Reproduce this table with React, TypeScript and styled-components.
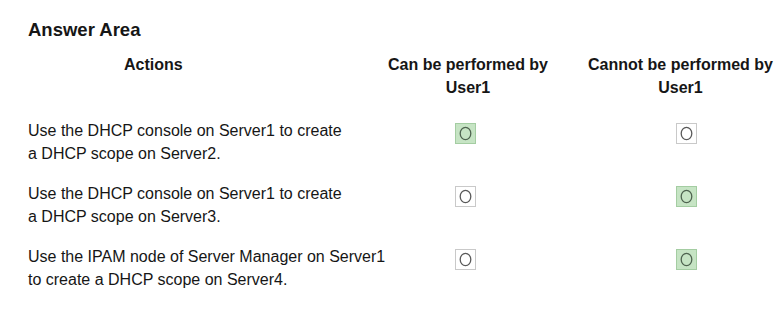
import React from "react";
import styled, { createGlobalStyle } from "styled-components";

const GlobalStyle = createGlobalStyle`
  body {
    margin: 0;
    background: #ffffff;
    overflow: hidden;
    font-family: "Liberation Sans", Arial, sans-serif;
    color: #161616;
  }
`;

const Page = styled.div`
  width: 784px;
  height: 332px;
  padding: 19px 0 0 28px;
  box-sizing: border-box;
`;

const Title = styled.div`
  font-size: 18.5px;
  line-height: 22px;
  font-weight: bold;
  margin-bottom: 12px;
`;

const Table = styled.div`
  display: grid;
  grid-template-columns: 332px 216px 209px;
  row-gap: 17px;
`;

const HeadCell = styled.div<{ $pad?: number }>`
  font-size: 16px;
  line-height: 23px;
  font-weight: bold;
  text-align: ${(p) => (p.$pad ? "left" : "center")};
  padding-left: ${(p) => p.$pad || 0}px;
  white-space: nowrap;
  margin-bottom: 3px;
`;

const ActionText = styled.div`
  font-size: 16px;
  line-height: 23px;
  white-space: pre;
  min-width: 0;
`;

const ChoiceCell = styled.div<{ $shift: number }>`
  display: flex;
  justify-content: center;
  align-items: flex-start;
  padding-top: 4px;
  padding-left: ${(p) => Math.max(p.$shift, 0)}px;
  padding-right: ${(p) => Math.max(-p.$shift, 0)}px;
`;

const Box = styled.div<{ $selected: boolean }>`
  width: 21px;
  height: 21px;
  box-sizing: border-box;
  display: flex;
  align-items: center;
  justify-content: center;
  background: ${(p) => (p.$selected ? "#c6e4c4" : "#ffffff")};
  border: 1px solid ${(p) => (p.$selected ? "#a4cda2" : "#c9c9c9")};
`;

const Radio = ({ selected }: { selected: boolean }) => (
  <Box $selected={selected}>
    <svg width="13" height="15" viewBox="0 0 13 15">
      <ellipse
        cx="6.5"
        cy="7.5"
        rx="5.3"
        ry="6.2"
        fill="none"
        stroke={selected ? "#4f6450" : "#5a5a5a"}
        strokeWidth="1.3"
      />
    </svg>
  </Box>
);

const rows = [
  {
    text: "Use the DHCP console on Server1 to create\na DHCP scope on Server2.",
    answer: 0,
  },
  {
    text: "Use the DHCP console on Server1 to create\na DHCP scope on Server3.",
    answer: 1,
  },
  {
    text: "Use the IPAM node of Server Manager on Server1\nto create a DHCP scope on Server4.",
    answer: 1,
  },
];

const App = () => {
  return (
    <Page>
      <GlobalStyle />
      <Title>Answer Area</Title>
      <Table>
        <HeadCell $pad={96}>Actions</HeadCell>
        <HeadCell>
          Can be performed by
          <br />
          User1
        </HeadCell>
        <HeadCell>
          Cannot be performed by
          <br />
          User1
        </HeadCell>
        {rows.map((row, i) => (
          <React.Fragment key={i}>
            <ActionText>{row.text}</ActionText>
            <ChoiceCell $shift={-5}>
              <Radio selected={row.answer === 0} />
            </ChoiceCell>
            <ChoiceCell $shift={11}>
              <Radio selected={row.answer === 1} />
            </ChoiceCell>
          </React.Fragment>
        ))}
      </Table>
    </Page>
  );
};

export default App;
